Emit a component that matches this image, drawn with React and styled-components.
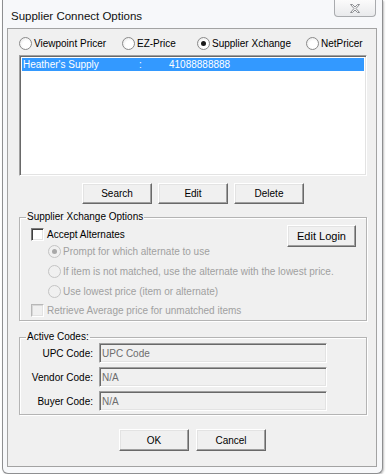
import styled, { createGlobalStyle } from "styled-components";

const GlobalStyle = createGlobalStyle`
  html, body {
    margin: 0;
    background: #ffffff;
  }
  body {
    font-family: "Liberation Sans", Arial, sans-serif;
    font-size: 10px;
    color: #000;
  }
`;

const SWindow = styled.div`
  box-sizing: border-box;
  width: 381px;
  height: 474px;
  margin-left: 2px;
  padding: 0 5px 6px 4px;
  display: flex;
  flex-direction: column;
  background: #f7f8fa;
  border: 1px solid #8e8f91;
  border-top: none;
  border-radius: 0 0 6px 6px;
  box-shadow: 1px 1px 2px rgba(0, 0, 0, 0.25);
`;

const STitleBar = styled.div`
  height: 28px;
  display: flex;
  align-items: flex-start;
`;

const STitle = styled.div`
  margin: 10px 0 0 4px;
  font-size: 11.5px;
  color: #111;
`;

const SClose = styled.div`
  margin-left: auto;
  margin-right: 1px;
  width: 42px;
  height: 17px;
  box-sizing: border-box;
  border: 1px solid #a9abae;
  border-top: none;
  border-radius: 0 0 4px 4px;
  background: linear-gradient(#fbfbfb, #e9eaec);
  display: flex;
  align-items: center;
  justify-content: center;
`;

const SClient = styled.div`
  flex: 1;
  display: flex;
  flex-direction: column;
  background: #f0f0f0;
  border: 1px solid #a3a3a3;
  padding: 0 9px 0 11px;
`;

const SRadioRow = styled.div`
  display: grid;
  grid-template-columns: 103px 75px 109px auto;
  margin-top: 7px;
  height: 14px;
  align-items: center;
`;

const SOption = styled.label`
  display: flex;
  align-items: center;
  gap: 2px;
  white-space: nowrap;
  color: ${(p) => (p.disabled ? "#a0a0a0" : "#000")};
`;

const SRadio = styled.span`
  box-sizing: border-box;
  width: 13px;
  height: 13px;
  border-radius: 50%;
  border: 1px solid ${(p) => (p.disabled ? "#c4c4c4" : "#8a8a8a")};
  background: ${(p) =>
    p.disabled
      ? "#f0f0f0"
      : "radial-gradient(circle at 60% 60%, #ffffff 40%, #e0e0e0 100%)"};
  display: flex;
  align-items: center;
  justify-content: center;
  &::after {
    content: "";
    width: 5px;
    height: 5px;
    border-radius: 50%;
    background: ${(p) => (p.disabled ? "#a8a8a8" : "#1a1a1a")};
    display: ${(p) => (p.checked ? "block" : "none")};
  }
`;

const SCheck = styled.span`
  box-sizing: border-box;
  flex: none;
  width: 13px;
  height: 13px;
  margin-right: 3px;
  background: ${(p) => (p.disabled ? "#f0f0f0" : "#ffffff")};
  border: 1px solid;
  border-color: ${(p) =>
    p.disabled ? "#b8b8b8 #ffffff #ffffff #b8b8b8" : "#7a7a7a #ffffff #ffffff #7a7a7a"};
  box-shadow: inset 1px 1px ${(p) => (p.disabled ? "#d8d8d8" : "#404040")},
    inset -1px -1px #e3e3e3;
`;

const SListBox = styled.div`
  box-sizing: border-box;
  margin-top: 5px;
  height: 121px;
  width: 348px;
  background: #ffffff;
  border: 1px solid;
  border-color: #a0a0a0 #ffffff #ffffff #a0a0a0;
  box-shadow: inset 1px 1px #696969, inset -1px -1px #e3e3e3;
  padding: 2px 2px;
`;

const SListRow = styled.div`
  display: grid;
  grid-template-columns: 116px 30px auto;
  height: 13px;
  align-items: center;
  padding-left: 1px;
  background: ${(p) => (p.selected ? "#3399ff" : "transparent")};
  color: ${(p) => (p.selected ? "#ffffff" : "#000")};
`;

const SButtonRow = styled.div`
  display: flex;
  gap: ${(p) => p.gap}px;
  margin-top: ${(p) => p.top}px;
  padding-left: ${(p) => p.left}px;
`;

const SButton = styled.button`
  box-sizing: border-box;
  flex: none;
  width: ${(p) => p.w || 70}px;
  height: ${(p) => p.h || 21}px;
  padding: 0;
  white-space: nowrap;
  font-family: "Liberation Sans", Arial, sans-serif;
  font-size: ${(p) => p.fs || 10}px;
  color: #000;
  background: #f0f0f0;
  border: 1px solid;
  border-color: #ffffff #696969 #696969 #ffffff;
  box-shadow: inset -1px -1px #a0a0a0, inset 1px 1px #e3e3e3;
`;

const SGroup = styled.fieldset`
  box-sizing: border-box;
  margin: ${(p) => p.top}px 0 0 0;
  width: 348px;
  min-width: 0;
  padding: ${(p) => p.pad};
  border: 1px solid #b4b4b4;
  box-shadow: 1px 1px 0 #ffffff, inset 1px 1px 0 #ffffff;
`;

const SLegend = styled.legend`
  margin-left: 6px;
  padding: 0 1px;
  line-height: 12px;
  font-size: 10px;
`;

const SOptionsGrid = styled.div`
  display: grid;
  grid-template-columns: minmax(0, 1fr) 69px;
  padding-left: 11px;
  padding-right: 10px;
`;

const SStack = styled.div`
  display: flex;
  flex-direction: column;
  min-width: 0;
`;

const SLine = styled.div`
  height: ${(p) => p.h}px;
  display: flex;
  align-items: center;
  white-space: nowrap;
  padding-left: ${(p) => p.indent || 0}px;
`;

const SEditLogin = styled(SButton)`
  margin-top: -2px;
`;

const SCodes = styled.div`
  display: grid;
  grid-template-columns: 73px 228px;
  column-gap: 6px;
  row-gap: 4px;
  align-items: center;
`;

const SCodeLabel = styled.div`
  text-align: right;
`;

const SField = styled.div`
  box-sizing: border-box;
  height: 20px;
  display: flex;
  align-items: center;
  padding-left: 2px;
  color: #6d6d6d;
  background: #f0f0f0;
  border: 1px solid;
  border-color: #a0a0a0 #ffffff #ffffff #a0a0a0;
  box-shadow: inset 1px 1px #696969, inset -1px -1px #e3e3e3;
`;

const CloseGlyph = () => (
  <svg width="12" height="11" viewBox="0 0 12 11">
    <path
      d="M1.5 1.5 L3.5 1.5 L6 4 L8.5 1.5 L10.5 1.5 L7 5.5 L10.5 9.5 L8.5 9.5 L6 7 L3.5 9.5 L1.5 9.5 L5 5.5 Z"
      fill="#f4f4f4"
      stroke="#8d8f93"
      strokeWidth="1"
      strokeLinejoin="round"
    />
  </svg>
);

const App = () => {
  return (
    <>
      <GlobalStyle />
      <SWindow>
        <STitleBar>
          <STitle>Supplier Connect Options</STitle>
          <SClose>
            <CloseGlyph />
          </SClose>
        </STitleBar>
        <SClient>
          <SRadioRow>
            <SOption>
              <SRadio />
              Viewpoint Pricer
            </SOption>
            <SOption>
              <SRadio />
              EZ-Price
            </SOption>
            <SOption>
              <SRadio checked />
              Supplier Xchange
            </SOption>
            <SOption>
              <SRadio />
              NetPricer
            </SOption>
          </SRadioRow>

          <SListBox>
            <SListRow selected>
              <span>Heather's Supply</span>
              <span>:</span>
              <span>41088888888</span>
            </SListRow>
          </SListBox>

          <SButtonRow top={7} left={63} gap={6}>
            <SButton>Search</SButton>
            <SButton>Edit</SButton>
            <SButton>Delete</SButton>
          </SButtonRow>

          <SGroup top={7} pad="4px 0 1px 0">
            <SLegend>Supplier Xchange Options</SLegend>
            <SOptionsGrid>
              <SStack>
                <SLine h={14}>
                  <SCheck />
                  Accept Alternates
                </SLine>
                <SLine h={20} indent={17}>
                  <SOption disabled>
                    <SRadio disabled checked />
                    Prompt for which alternate to use
                  </SOption>
                </SLine>
                <SLine h={20} indent={17}>
                  <SOption disabled>
                    <SRadio disabled />
                    If item is not matched, use the alternate with the lowest price.
                  </SOption>
                </SLine>
                <SLine h={20} indent={17}>
                  <SOption disabled>
                    <SRadio disabled />
                    Use lowest price (item or alternate)
                  </SOption>
                </SLine>
                <SLine h={18}>
                  <SCheck disabled />
                  <SOption disabled>Retrieve Average price for unmatched items</SOption>
                </SLine>
              </SStack>
              <SEditLogin w={69} h={22} fs={11}>
                Edit Login
              </SEditLogin>
            </SOptionsGrid>
          </SGroup>

          <SGroup top={10} pad="0 0 3px 0">
            <SLegend>Active Codes:</SLegend>
            <SCodes>
              <SCodeLabel>UPC Code:</SCodeLabel>
              <SField>UPC Code</SField>
              <SCodeLabel>Vendor Code:</SCodeLabel>
              <SField>N/A</SField>
              <SCodeLabel>Buyer Code:</SCodeLabel>
              <SField>N/A</SField>
            </SCodes>
          </SGroup>

          <SButtonRow top={14} left={100} gap={7}>
            <SButton h={22}>OK</SButton>
            <SButton h={22}>Cancel</SButton>
          </SButtonRow>
        </SClient>
      </SWindow>
    </>
  );
};

export default App;
